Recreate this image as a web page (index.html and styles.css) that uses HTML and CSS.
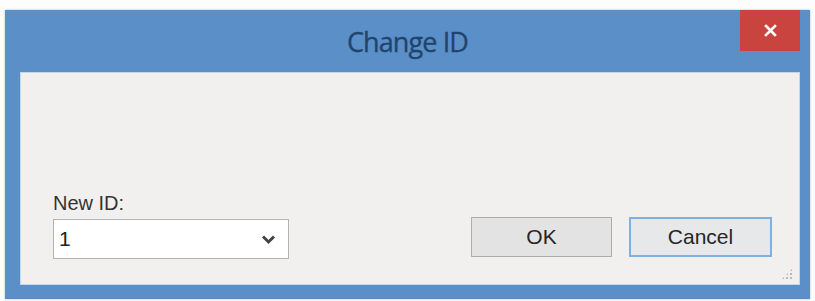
FILE: index.html
```html
<!DOCTYPE html>
<html>
<head>
<meta charset="utf-8">
<link rel="stylesheet" href="styles.css">
</head>
<body>
<div class="window">
  <div class="titlebar">
    <div class="spacer"></div>
    <div class="title">Change ID</div>
    <div class="close"><svg width="13" height="13" viewBox="0 0 13 13"><path d="M2 2 L11 11 M11 2 L2 11" stroke="#fff" stroke-width="2.6" stroke-linecap="square"/></svg></div>
  </div>
  <div class="client">
    <div class="row">
      <div class="field">
        <div class="label">New ID:</div>
        <div class="combo">
          <span class="value">1</span>
          <svg class="chev" width="15" height="11" viewBox="0 0 15 11"><path d="M2 2.5 L7.5 8 L13 2.5" fill="none" stroke="#444" stroke-width="3"/></svg>
        </div>
      </div>
      <div class="buttons">
        <div class="btn">OK</div>
        <div class="btn default">Cancel</div>
      </div>
    </div>
    <div class="grip"></div>
  </div>
</div>
</body>
</html>
```
FILE: styles.css
```css
html, body { margin: 0; padding: 0; background: #fdfdfd; }
body { padding: 10px 5px 2px 5px; }
.window {
  width: 805px;
  height: 289px;
  background: #5a8fc8;
  display: flex;
  flex-direction: column;
  box-shadow: 0 0 2px rgba(60,90,130,0.4);
}
.titlebar {
  height: 62px;
  display: grid;
  grid-template-columns: 1fr auto 1fr;
  align-items: start;
}
.title {
  font-family: "Open Sans", "Noto Sans", sans-serif;
  font-size: 27px;
  color: #21446c;
  line-height: 62px;
  height: 62px;
  margin-top: 1px;
  letter-spacing: -0.9px;
  -webkit-text-stroke: 0.3px #21446c;
}
.close {
  justify-self: end;
  width: 60px;
  height: 41px;
  margin-right: 10px;
  background: #c9443f;
  display: flex;
  align-items: center;
  justify-content: center;
}
.client {
  flex: 1;
  margin: 0 10px 14px 15px;
  background: #f1f0ef;
  display: flex;
  flex-direction: column;
  justify-content: flex-end;
  padding: 0 27px 25px 32px;
  position: relative;
  border: 1px solid #c7d6e6;
}
.row {
  display: flex;
  justify-content: space-between;
  align-items: flex-end;
}
.field { display: flex; flex-direction: column; }
.label {
  font-family: "Liberation Sans", Arial, sans-serif;
  font-size: 20px;
  color: #333;
  margin-bottom: 4px;
  line-height: 24px;
}
.combo {
  background: #fff;
  border: 1px solid #b3b3b3;
  display: flex;
  align-items: center;
  justify-content: space-between;
  padding: 0 12px 0 5px;
  box-sizing: border-box;
  width: 236px;
  height: 40px;
}
.value {
  font-family: "Liberation Sans", Arial, sans-serif;
  font-size: 21px;
  color: #222;
}
.buttons { display: flex; gap: 17px; margin-bottom: 2px; }
.btn {
  width: 141px;
  height: 40px;
  box-sizing: border-box;
  border: 1px solid #adadad;
  background: #e3e3e3;
  font-family: "Liberation Sans", Arial, sans-serif;
  font-size: 21px;
  color: #262626;
  display: flex;
  align-items: center;
  justify-content: center;
}
.btn.default {
  width: 143px;
  border: 2px solid #7fb1e0;
  background: #e6e8ea;
}
.grip {
  position: absolute;
  right: 6px;
  bottom: 4px;
  width: 12px;
  height: 12px;
  background:
    radial-gradient(circle, #b8b8b8 1px, transparent 1.2px) 0 0 / 4px 4px;
  clip-path: polygon(100% 0, 100% 100%, 0 100%);
}
```
